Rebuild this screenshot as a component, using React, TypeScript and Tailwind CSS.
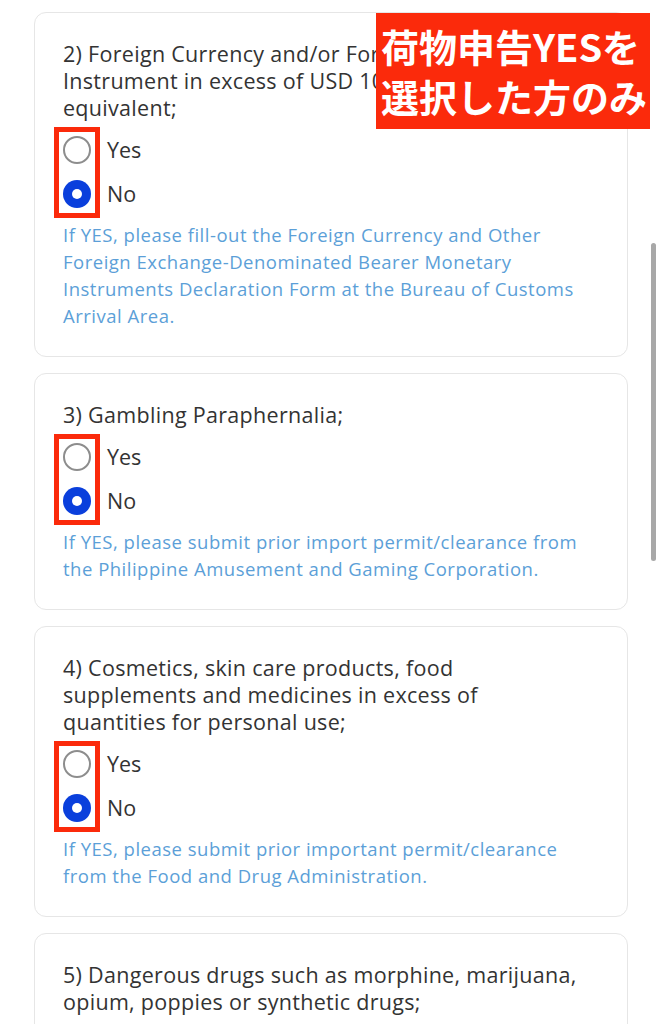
import type { ReactNode } from "react";

interface Question {
  id: number;
  lines: string[];
  note: string[];
}

const QUESTIONS: Question[] = [
  {
    id: 2,
    lines: [
      "2) Foreign Currency and/or Foreign Monetary",
      "Instrument in excess of USD 10,000 or its",
      "equivalent;",
    ],
    note: [
      "If YES, please fill-out the Foreign Currency and Other",
      "Foreign Exchange-Denominated Bearer Monetary",
      "Instruments Declaration Form at the Bureau of Customs",
      "Arrival Area.",
    ],
  },
  {
    id: 3,
    lines: ["3) Gambling Paraphernalia;"],
    note: [
      "If YES, please submit prior import permit/clearance from",
      "the Philippine Amusement and Gaming Corporation.",
    ],
  },
  {
    id: 4,
    lines: [
      "4) Cosmetics, skin care products, food",
      "supplements and medicines in excess of",
      "quantities for personal use;",
    ],
    note: [
      "If YES, please submit prior important permit/clearance",
      "from the Food and Drug Administration.",
    ],
  },
];

function Lines({ lines }: { lines: string[] }) {
  return (
    <>
      {lines.map((l, i) => (
        <span key={i} className="block whitespace-nowrap">
          {l}
        </span>
      ))}
    </>
  );
}

function Radio({ checked }: { checked: boolean }) {
  if (checked) {
    return (
      <span className="w-[28px] h-[28px] rounded-full bg-[#0a3fdc] flex items-center justify-center shrink-0">
        <span className="w-[10px] h-[10px] rounded-full bg-white" />
      </span>
    );
  }
  return <span className="w-[28px] h-[28px] rounded-full border-2 border-[#8d8d8d] bg-white shrink-0" />;
}

function Card({ children }: { children: ReactNode }) {
  return (
    <div className="rounded-[12px] border border-[#e6e6e6] bg-white px-[28px] pt-[27px] pb-[27px]">
      {children}
    </div>
  );
}

export default function App() {
  return (
    <div
      className="relative min-h-[1024px] bg-white overflow-hidden"
      style={{ fontFamily: "'Open Sans', 'Noto Sans', sans-serif" }}
    >
      <div className="flex flex-col gap-[16px] px-[34px] pt-[12px]">
        {QUESTIONS.map((q) => (
          <Card key={q.id}>
            <div className="text-[21.5px] leading-[27px] tracking-[0.3px] text-[#333]">
              <Lines lines={q.lines} />
            </div>
            <div className="relative mt-[7px] w-fit">
              <div className="flex items-center h-[44px] gap-[16px]">
                <Radio checked={false} />
                <span className="text-[21.5px] text-[#333]">Yes</span>
              </div>
              <div className="flex items-center h-[44px] gap-[16px]">
                <Radio checked />
                <span className="text-[21.5px] text-[#333]">No</span>
              </div>
              <div className="absolute left-[-9px] top-[-1px] w-[46px] h-[91px] border-[5px] border-[#fb2a0b]" />
            </div>
            <div className="mt-[5px] text-[18.5px] leading-[27px] tracking-[0.5px] text-[#5c9fd8]">
              <Lines lines={q.note} />
            </div>
          </Card>
        ))}
        <Card>
          <div className="text-[21.5px] leading-[27px] tracking-[0.3px] text-[#333]">
            <Lines
              lines={[
                "5) Dangerous drugs such as morphine, marijuana,",
                "opium, poppies or synthetic drugs;",
              ]}
            />
          </div>
          <div className="h-[120px]" />
        </Card>
      </div>

      {/* annotation label */}
      <div
        className="absolute left-[376px] top-[13px] w-[274px] h-[116px] bg-[#fb2a0b] flex flex-col justify-center pl-[5px] text-white font-bold text-[38px] leading-[50px]"
        style={{ fontFamily: "'Noto Sans CJK JP', 'Noto Sans', sans-serif" }}
      >
        <span className="whitespace-nowrap">荷物申告YESを</span>
        <span className="whitespace-nowrap">選択した方のみ</span>
      </div>

      {/* scrollbar */}
      <div className="absolute left-[651px] top-[243px] w-[5px] h-[318px] rounded-full bg-[#a8a8a8]" />
    </div>
  );
}
